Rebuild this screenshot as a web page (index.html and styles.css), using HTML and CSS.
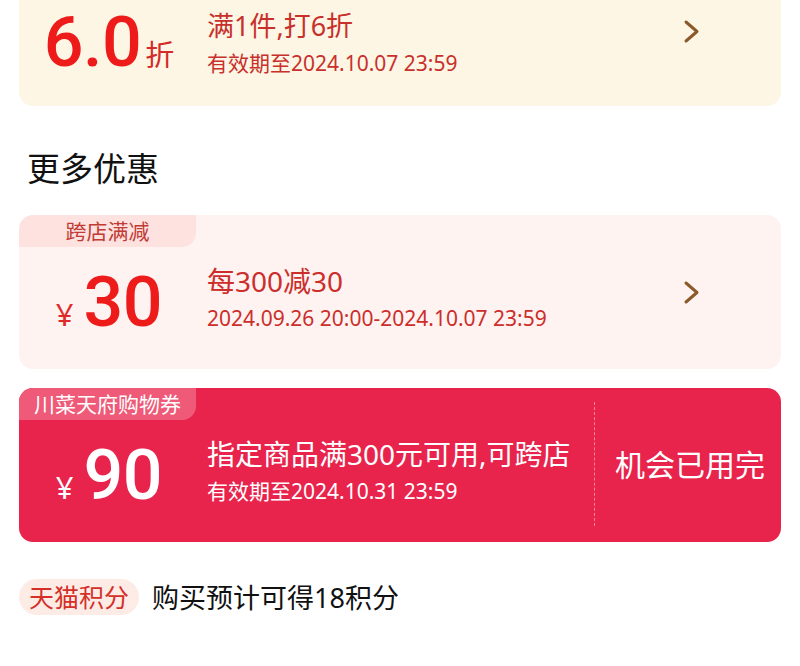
FILE: index.html
```html
<!DOCTYPE html>
<html lang="zh-CN">
<head>
  <meta charset="UTF-8" />
  <meta name="viewport" content="width=device-width, initial-scale=1.0" />
  <title>优惠</title>
  <link rel="stylesheet" href="styles.css">
</head>
<body>
  <div class="page">
    <!-- Current shop discount (top part scrolled away) -->
    <div class="coupon coupon-gold coupon-first">
      <div class="coupon-main">
        <div class="coupon-body">
          <div class="amount">
            <span class="num">6.0</span><span class="unit">折</span>
          </div>
          <div class="info">
            <div class="title">满1件,打6折</div>
            <div class="date">有效期至2024.10.07 23:59</div>
          </div>
        </div>
      </div>
      <div class="side">
        <svg class="arrow" width="17" height="25" viewBox="0 0 17 25"><path d="M3 3 L14 12.5 L3 22" fill="none" stroke="#8b5a2b" stroke-width="3" stroke-linecap="round" stroke-linejoin="round"/></svg>
      </div>
    </div>

    <h2 class="section-title">更多优惠</h2>

    <div class="coupon coupon-pink">
      <div class="coupon-main">
        <div class="tag">跨店满减</div>
        <div class="coupon-body">
          <div class="amount">
            <span class="yen">¥</span><span class="num">30</span>
          </div>
          <div class="info">
            <div class="title">每300减30</div>
            <div class="date">2024.09.26 20:00-2024.10.07 23:59</div>
          </div>
        </div>
      </div>
      <div class="side">
        <svg class="arrow" width="17" height="25" viewBox="0 0 17 25"><path d="M3 3 L14 12.5 L3 22" fill="none" stroke="#8b5a2b" stroke-width="3" stroke-linecap="round" stroke-linejoin="round"/></svg>
      </div>
    </div>

    <div class="coupon coupon-red">
      <div class="coupon-main">
        <div class="tag">川菜天府购物券</div>
        <div class="coupon-body">
          <div class="amount">
            <span class="yen">¥</span><span class="num">90</span>
          </div>
          <div class="info">
            <div class="title">指定商品满300元可用,可跨店</div>
            <div class="date">有效期至2024.10.31 23:59</div>
          </div>
        </div>
      </div>
      <div class="side side-used">
        <span class="used">机会已用完</span>
      </div>
    </div>

    <div class="points">
      <span class="points-tag">天猫积分</span>
      <span class="points-text">购买预计可得18积分</span>
    </div>
  </div>
</body>
</html>
```

FILE: styles.css
```css
/* Base */
body {
  margin: 0;
  background: #fff;
  font-family: "Noto Sans", "Noto Sans CJK SC", sans-serif;
  color: #111;
  overflow: hidden;
}
.page {
  padding: 0 19px;
}

/* Coupon card */
.coupon {
  display: flex;
  border-radius: 14px;
  height: 154px;
  margin-bottom: 19px;
  overflow: hidden;
}
.coupon-first {
  height: 106px;
  margin-bottom: 0;
  border-radius: 0 0 14px 14px;
}
.coupon-main {
  flex: 1;
  display: flex;
  flex-direction: column;
}
.tag {
  width: 177px;
  height: 32px;
  line-height: 32px;
  text-align: center;
  font-size: 21px;
  border-radius: 14px 0 14px 0;
}
.coupon-body {
  flex: 1;
  display: flex;
  align-items: center;
  padding-bottom: 12px;
}
.amount {
  width: 180px;
  display: flex;
  align-items: baseline;
  justify-content: center;
}
.num {
  font-family: Roboto, "Noto Sans", sans-serif;
  font-weight: 500;
  font-size: 70px;
  line-height: 1;
  letter-spacing: -0.5px;
}
.unit {
  font-size: 29px;
  margin-left: 4px;
}
.yen {
  font-size: 31px;
  margin-right: 10px;
}
.info {
  flex: 1;
  padding-left: 8px;
  padding-bottom: 10px;
}
.title {
  font-size: 28px;
  line-height: 34px;
}
.date {
  font-size: 21px;
  line-height: 26px;
  margin-top: 7px;
}
.side {
  width: 186px;
  display: flex;
  align-items: center;
  justify-content: center;
}
.arrow {
  margin-left: 6px;
}

/* Gold */
.coupon-gold {
  background: #fdf6e5;
}
.coupon-gold .coupon-body {
  padding-bottom: 22px;
}
.coupon-gold .side {
  padding-bottom: 44px;
}
.coupon-gold .num {
  color: #ee1b1b;
}
.coupon-gold .unit {
  color: #d42a2a;
}
.coupon-gold .info {
  padding-bottom: 0;
}
.coupon-gold .title {
  font-size: 27px;
}
.coupon-gold .title,
.coupon-gold .date {
  color: #c8302c;
}

/* Pink */
.coupon-pink {
  background: #fef3f1;
}
.coupon-pink .tag {
  background: #fde2e0;
  color: #c23a34;
}
.coupon-pink .num {
  color: #ee1b1b;
}
.coupon-pink .yen {
  color: #e02a2a;
}
.coupon-pink .title,
.coupon-pink .date {
  color: #cc2e2c;
}

/* Red */
.coupon-red {
  background: #e8244d;
  color: #fff;
}
.coupon-red .tag {
  background: #ee5a78;
}
.side-used {
  margin: 14px 0 16px;
  border-left: 1px dashed rgba(255, 255, 255, 0.45);
}
.used {
  font-size: 30px;
  margin-top: -2px;
  margin-left: 4px;
}

/* Section title */
.section-title {
  margin: 43px 0 26px 8px;
  font-size: 33px;
  line-height: 40px;
  font-weight: 400;
  color: #111;
}

/* Points */
.points {
  display: flex;
  align-items: center;
  margin-top: 35px;
}
.points-tag {
  height: 36px;
  line-height: 36px;
  padding: 0 10px;
  border-radius: 18px;
  background: #fdebe6;
  color: #d43028;
  font-size: 25px;
}
.points-text {
  margin-left: 13px;
  font-size: 27px;
  color: #111;
}
```
